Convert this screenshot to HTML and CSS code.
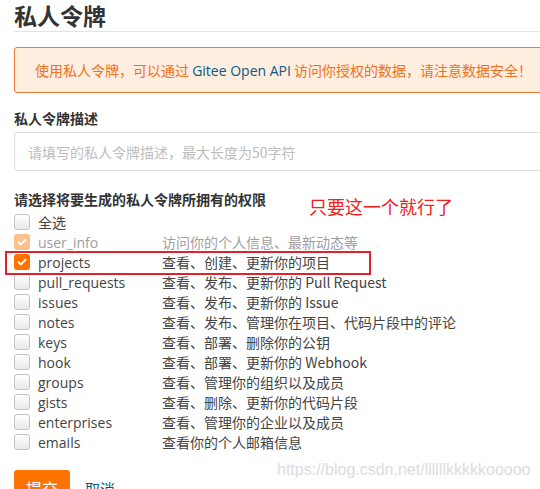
FILE: index.html
```html
<!DOCTYPE html>
<html lang="zh-CN">
<head>
<meta charset="utf-8">
<title>私人令牌</title>
<link rel="stylesheet" href="styles.css">
</head>
<body>
<div class="page">
  <h1 class="title">私人令牌</h1>
  <div class="alert">使用私人令牌，可以通过 <span class="api">Gitee Open API</span> 访问你授权的数据，请注意数据安全！</div>
  <div class="field-label">私人令牌描述</div>
  <div class="input"><span class="placeholder">请填写的私人令牌描述，最大长度为50字符</span></div>
  <div class="perm-title">请选择将要生成的私人令牌所拥有的权限</div>
  <div class="perm-list">
    <div class="row"><span class="cb"></span><span class="name">全选</span></div>
    <div class="row disabled"><span class="cb checked"><svg viewBox="0 0 16 16"><path d="M4 8.2l2.7 2.6L12 5.4" /></svg></span><span class="name">user_info</span><span class="desc">访问你的个人信息、最新动态等</span></div>
    <div class="row"><span class="cb checked"><svg viewBox="0 0 16 16"><path d="M4 8.2l2.7 2.6L12 5.4" /></svg></span><span class="name">projects</span><span class="desc">查看、创建、更新你的项目</span></div>
    <div class="row"><span class="cb"></span><span class="name">pull_requests</span><span class="desc">查看、发布、更新你的 Pull Request</span></div>
    <div class="row"><span class="cb"></span><span class="name">issues</span><span class="desc">查看、发布、更新你的 Issue</span></div>
    <div class="row"><span class="cb"></span><span class="name">notes</span><span class="desc">查看、发布、管理你在项目、代码片段中的评论</span></div>
    <div class="row"><span class="cb"></span><span class="name">keys</span><span class="desc">查看、部署、删除你的公钥</span></div>
    <div class="row"><span class="cb"></span><span class="name">hook</span><span class="desc">查看、部署、更新你的 Webhook</span></div>
    <div class="row"><span class="cb"></span><span class="name">groups</span><span class="desc">查看、管理你的组织以及成员</span></div>
    <div class="row"><span class="cb"></span><span class="name">gists</span><span class="desc">查看、删除、更新你的代码片段</span></div>
    <div class="row"><span class="cb"></span><span class="name">enterprises</span><span class="desc">查看、管理你的企业以及成员</span></div>
    <div class="row"><span class="cb"></span><span class="name">emails</span><span class="desc">查看你的个人邮箱信息</span></div>
  </div>
  <div class="actions">
    <span class="btn">提交</span>
    <span class="cancel">取消</span>
  </div>
</div>
<div class="mark-box"></div>
<div class="mark-text">只要这一个就行了</div>
<div class="watermark">https://blog.csdn.net/llllllkkkkkooooo</div>
</body>
</html>
```
FILE: styles.css
```css
html, body {
  margin: 0;
  padding: 0;
  background: #fff;
  overflow: hidden;
}
body {
  position: relative;
  width: 540px;
  height: 489px;
  font-family: "Open Sans", "Noto Sans CJK SC", sans-serif;
  color: #333;
}
.page {
  width: 620px;
  padding-left: 14px;
}
.title {
  margin: 0;
  font-family: "Noto Sans CJK SC", sans-serif;
  font-size: 23px;
  font-weight: 700;
  line-height: 30px;
  padding-bottom: 1px;
  border-bottom: 1px solid #e4e4e4;
  color: #333;
}
.alert {
  margin-top: 15px;
  height: 44px;
  line-height: 44px;
  border: 1px solid #f07a32;
  border-radius: 3px;
  background: #fdeee0;
  padding-left: 20px;
  font-size: 14px;
  color: #f0701e;
  font-family: "Noto Sans CJK SC", sans-serif;
}
.api {
  font-family: "Open Sans", sans-serif;
  color: #0a5a82;
}
.field-label {
  margin-top: 15px;
  font-family: "Noto Sans CJK SC", sans-serif;
  font-size: 14px;
  font-weight: 700;
  line-height: 20px;
  color: #333;
}
.input {
  margin-top: 4px;
  height: 37px;
  border: 1px solid #dedede;
  border-radius: 3px;
  padding-left: 13px;
  display: flex;
  align-items: center;
}
.placeholder {
  font-family: "Noto Sans CJK SC", sans-serif;
  font-size: 14px;
  color: #bdbdbd;
}
.perm-title {
  margin-top: 18px;
  font-family: "Noto Sans CJK SC", sans-serif;
  font-size: 14px;
  font-weight: 700;
  line-height: 20px;
  color: #333;
}
.perm-list {
  margin-top: 3px;
  display: flex;
  flex-direction: column;
}
.row {
  display: flex;
  align-items: center;
  height: 20px;
  font-size: 14px;
  color: #444;
}
.cb {
  box-sizing: border-box;
  width: 16px;
  height: 16px;
  border: 1px solid #c4c4c4;
  border-radius: 3px;
  background: linear-gradient(#ffffff, #e8e8e8);
  margin-right: 8px;
  display: flex;
  align-items: center;
  justify-content: center;
  flex: none;
}
.cb svg {
  width: 14px;
  height: 14px;
  fill: none;
  stroke: #fff;
  stroke-width: 2.2;
  stroke-linecap: round;
  stroke-linejoin: round;
}
.cb.checked {
  border: none;
  background: #fe7300;
}
.row.disabled .cb.checked {
  background: #fdc08d;
}
.row.disabled .name,
.row.disabled .desc {
  color: #a0a0a0;
}
.name {
  width: 124px;
  flex: none;
  font-family: "Open Sans", "Noto Sans CJK SC", sans-serif;
}
.desc {
  font-family: "Noto Sans CJK SC", sans-serif;
  white-space: nowrap;
  color: #444;
}
.actions {
  margin-top: 18px;
  display: flex;
  align-items: center;
  gap: 15px;
}
.btn {
  width: 56px;
  height: 36px;
  background: #fe7300;
  border-radius: 3px;
  color: #fff;
  font-family: "Noto Sans CJK SC", sans-serif;
  font-size: 16px;
  display: flex;
  align-items: center;
  justify-content: center;
}
.cancel {
  font-family: "Noto Sans CJK SC", sans-serif;
  font-size: 15px;
  color: #005980;
}
.mark-box {
  position: absolute;
  left: 5px;
  top: 251px;
  width: 362px;
  height: 20px;
  border: 2px solid #e6202a;
}
.mark-text {
  position: absolute;
  left: 309px;
  top: 195px;
  font-family: "Noto Sans CJK SC", sans-serif;
  font-size: 18px;
  line-height: 22px;
  color: #f02020;
}
.watermark {
  position: absolute;
  left: 277px;
  top: 460px;
  font-family: "Liberation Sans", sans-serif;
  font-size: 16px;
  line-height: 19px;
  color: #dcdcdc;
}
```
